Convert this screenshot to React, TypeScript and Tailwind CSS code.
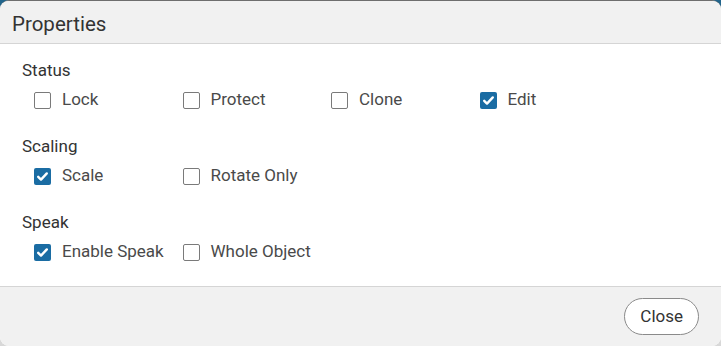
import React from 'react';

type Option = { label: string; checked: boolean };

const sections: { title: string; options: Option[] }[] = [
    {
        title: 'Status',
        options: [
            { label: 'Lock', checked: false },
            { label: 'Protect', checked: false },
            { label: 'Clone', checked: false },
            { label: 'Edit', checked: true },
        ],
    },
    {
        title: 'Scaling',
        options: [
            { label: 'Scale', checked: true },
            { label: 'Rotate Only', checked: false },
        ],
    },
    {
        title: 'Speak',
        options: [
            { label: 'Enable Speak', checked: true },
            { label: 'Whole Object', checked: false },
        ],
    },
];

const Checkbox: React.FC<Option> = ({ label, checked }) => (
    <label className="flex items-center w-[148.5px] h-[22px] cursor-pointer">
        {checked ? (
            <span className="w-[17px] h-[17px] rounded-[2px] bg-[#1a6ca3] flex items-center justify-center">
                <svg width="13" height="13" viewBox="0 0 13 13">
                    <path d="M2.2 6.8 L5 9.6 L10.8 3.4" fill="none" stroke="white" strokeWidth="2.4" strokeLinecap="round" strokeLinejoin="round" />
                </svg>
            </span>
        ) : (
            <span className="w-[17px] h-[17px] rounded-[2px] border-[1.5px] border-[#7a7a7a] bg-white" />
        )}
        <span className="ml-[11px] text-[17px] text-[#4a4a4a]">{label}</span>
    </label>
);

export default function App() {
    return (
        <div className="w-[721px] h-[346px] bg-[linear-gradient(to_bottom,#22658c_0%,#22658c_10%,#d8d8d8_90%,#d8d8d8_100%)] font-['Roboto',sans-serif]">
            <div className="w-full h-full rounded-[9px] overflow-hidden border-t border-[#6e6e6e] flex flex-col bg-white">
                {/* Header */}
                <div className="h-[43px] bg-[#f1f1f1] border-b border-[#d5d5d5] flex items-center px-[12px] shrink-0">
                    <span className="text-[20.5px] text-[#333] mt-[5px]">Properties</span>
                </div>

                {/* Body */}
                <div className="flex-1 px-[22px] pt-[15px] flex flex-col">
                    {sections.map((s, i) => (
                        <div key={s.title} className={i > 0 ? 'mt-[24px]' : ''}>
                            <div className="text-[17px] text-[#333] h-[22px] leading-[22px]">{s.title}</div>
                            <div className="flex pl-[12px] mt-[8px]">
                                {s.options.map((o) => (
                                    <Checkbox key={o.label} {...o} />
                                ))}
                            </div>
                        </div>
                    ))}
                </div>

                {/* Footer */}
                <div className="h-[60px] bg-[#f1f1f1] border-t border-[#d5d5d5] flex items-center justify-end pr-[22px] shrink-0">
                    <button className="h-[37px] px-[15px] rounded-full border border-[#8a8a8a] bg-white text-[17px] text-[#333]">
                        Close
                    </button>
                </div>
            </div>
        </div>
    );
}
